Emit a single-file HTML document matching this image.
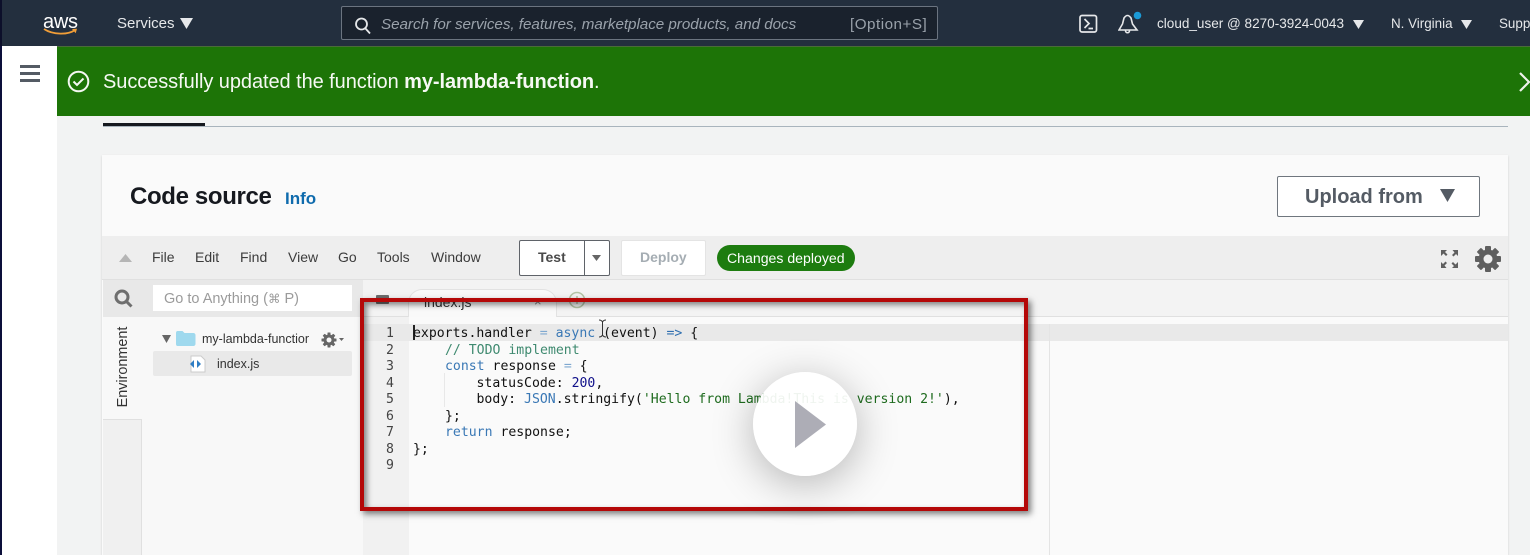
<!DOCTYPE html>
<html><head><meta charset="utf-8"><style>
html,body{margin:0;padding:0}
body{width:1530px;height:555px;overflow:hidden;position:relative;background:#f2f3f3;font-family:"Liberation Sans",sans-serif}
#w{position:absolute;left:0;top:0;width:1530px;height:555px;overflow:hidden;filter:blur(.35px)}
.a,.a *{box-sizing:border-box}
.a{position:absolute}
.t{position:absolute;white-space:nowrap;line-height:1}
.mono{font-family:"DejaVu Sans Mono",monospace;font-size:13.17px;color:#111}
.ln{position:absolute;white-space:pre;line-height:16.5px;height:16.5px}
.n{position:absolute;font-family:"DejaVu Sans Mono",monospace;font-size:13.17px;color:#444;left:386px;line-height:16.5px}
.k{color:#3a78b5}.c{color:#3f8a70}.s{color:#1e6b1e}.o{color:#7fa8d0}.d{color:#10108a}.nv{color:#2f6fb0}
.dk{font-family:"DejaVu Sans",sans-serif}
</style></head><body><div id="w">
<div class="a" style="left:0;top:0;width:2px;height:555px;background:#0c0f3a"></div>
<div class="a" style="left:2px;top:46px;width:55px;height:509px;background:#fff"></div>
<div class="a" style="left:0;top:0;width:1530px;height:46px;background:#232f3e"></div>
<div class="a" style="left:0;top:0;width:2px;height:46px;background:#0c0f2a"></div>
<div class="t" style="left:43px;top:12px;color:#fff;font-size:20px;letter-spacing:-.3px">aws</div>
<svg class="a" style="left:42px;top:27px" width="38" height="10" viewBox="0 0 38 10"><path d="M2 2C11 8 26 8 33 3" fill="none" stroke="#f19e38" stroke-width="1.8"/><path d="M30 2l5-.3-1.300 4.500z" fill="#f19e38"/></svg>
<div class="t" style="left:117px;top:16px;color:#e6e8ea;font-size:15px">Services</div>
<svg class="a" style="left:180px;top:18px" width="13" height="11"><path d="M0 0h13L6.500 11z" fill="#e6e8ea"/></svg>
<div class="a" style="left:341px;top:6px;width:597px;height:34px;background:#1a222d;border:1px solid #6b7480;border-radius:2px"></div>
<svg class="a" style="left:354px;top:16px" width="18" height="19" fill="none" stroke="#e6e8ea" stroke-width="1.800"><circle cx="7.500" cy="8" r="5.500"/><path d="M11.500 12.500l4.500 5"/></svg>
<div class="t" style="left:381px;top:17px;color:#9aa2ab;font-size:15.200px;font-style:italic;letter-spacing:-.03px">Search for services, features, marketplace products, and docs</div>
<div class="t" style="left:850px;top:17px;color:#9aa2ab;font-size:15.200px;letter-spacing:.5px">[Option+S]</div>
<svg class="a" style="left:1079px;top:14px" width="19" height="20" fill="none" stroke="#e6e8ea" stroke-width="1.700"><rect x="1" y="1.500" width="16.500" height="16.500" rx="2"/><path d="M5.500 5l4.500 4.500-4.500 4.500M9.500 14.500h4.500"/></svg>
<svg class="a" style="left:1118px;top:11px" width="26" height="24" fill="none" stroke="#e6e8ea" stroke-width="1.600"><path d="M1 19h18L14.500 13 13 7Q9.500 2 6 7L4.500 13zM7.500 19.500c0 3 4 3 4 0"/><circle cx="19.500" cy="4.500" r="3.800" fill="#1b9ad6" stroke="none"/></svg>
<div class="t" style="left:1157px;top:17px;color:#e6e8ea;font-size:13.550px">cloud_user @ 8270-3924-0043</div>
<svg class="a" style="left:1353px;top:20px" width="11" height="9"><path d="M0 0h11L5.500 9z" fill="#e6e8ea"/></svg>
<div class="t" style="left:1391px;top:17px;color:#e6e8ea;font-size:13.400px">N. Virginia</div>
<svg class="a" style="left:1461px;top:20px" width="11" height="9"><path d="M0 0h11L5.500 9z" fill="#e6e8ea"/></svg>
<div class="t" style="left:1499px;top:17px;color:#e6e8ea;font-size:13.400px">Support</div>

<div class="a" style="left:20px;top:65px;width:20px;height:3px;background:#545b64;box-shadow:0 7px 0 #545b64,0 14px 0 #545b64"></div>
<div class="a" style="left:57px;top:46px;width:1473px;height:70px;background:#1d7407;border-top:1px solid #4a6b3a"></div>
<svg class="a" style="left:67px;top:70px" width="23" height="23" fill="none" stroke="#f4f8f2" stroke-width="2"><circle cx="11.500" cy="11.500" r="9.800"/><path d="M6.500 11.500l3.500 3.500 6.500-6.500"/></svg>
<div class="t" style="left:103px;top:72px;color:#f6f9f4;font-size:20px;letter-spacing:-.07px">Successfully updated the function <b>my-lambda-function</b>.</div>
<svg class="a" style="left:1518px;top:71px" width="12" height="22" fill="none" stroke="#eef3ea" stroke-width="2.200"><path d="M2 2l9 9-9 9"/></svg>
<div class="a" style="left:103px;top:126px;width:1405px;height:1px;background:#a9b4bd"></div>
<div class="a" style="left:103px;top:123px;width:102px;height:3px;background:#16191f"></div>

<div class="a" style="left:102px;top:155px;width:1406px;height:400px;background:#fafafa;box-shadow:0 1px 2px rgba(0,0,0,.15)"></div>
<div class="t" style="left:130px;top:185px;color:#16191f;font-size:24px;font-weight:bold;letter-spacing:-.35px">Code source</div>
<div class="t" style="left:285px;top:190px;color:#0f6bad;font-size:17px;font-weight:bold">Info</div>
<div class="a" style="left:1277px;top:176px;width:203px;height:41px;background:#fff;border:1px solid #6f767e;border-radius:2px"></div>
<div class="t" style="left:1305px;top:187px;color:#545b64;font-size:20px;font-weight:bold">Upload from</div>
<svg class="a" style="left:1440px;top:189px" width="15" height="13"><path d="M0 0h15L7.500 13z" fill="#545b64"/></svg>

<div class="a" style="left:102px;top:236px;width:1406px;height:44px;background:#eeeeee;border-bottom:1px solid #e0e0e0"></div>
<svg class="a" style="left:119px;top:254px" width="13" height="8"><path d="M0 8L6.500 0 13 8z" fill="#b5b5b5"/></svg>
<div class="t" style="left:152px;top:250px;color:#3c3c3c;font-size:14px">File</div>
<div class="t" style="left:195px;top:250px;color:#3c3c3c;font-size:14px">Edit</div>
<div class="t" style="left:240px;top:250px;color:#3c3c3c;font-size:14px">Find</div>
<div class="t" style="left:288px;top:250px;color:#3c3c3c;font-size:14px">View</div>
<div class="t" style="left:338px;top:250px;color:#3c3c3c;font-size:14px">Go</div>
<div class="t" style="left:377px;top:250px;color:#3c3c3c;font-size:14px">Tools</div>
<div class="t" style="left:431px;top:250px;color:#3c3c3c;font-size:14px">Window</div>
<div class="a" style="left:519px;top:240px;width:91px;height:36px;background:#fff;border:1px solid #5f6369;border-radius:2px"></div>
<div class="a" style="left:584px;top:240px;width:1px;height:36px;background:#5f6369"></div>
<div class="t" style="left:538px;top:250px;color:#4a4a4a;font-size:14px;font-weight:bold">Test</div>
<svg class="a" style="left:592px;top:255px" width="9" height="6"><path d="M0 0h9L4.500 6z" fill="#666"/></svg>
<div class="a" style="left:621px;top:240px;width:85px;height:36px;background:#fff;border:1px solid #e4e4e4;border-radius:2px"></div>
<div class="t" style="left:640px;top:250px;color:#a5adb3;font-size:14px;font-weight:bold">Deploy</div>
<div class="a" style="left:717px;top:245px;width:138px;height:26px;background:#1d7c0f;border-radius:13px"></div>
<div class="t" style="left:727px;top:251px;color:#fff;font-size:14.100px">Changes deployed</div>
<svg class="a" style="left:1440px;top:249px" width="19" height="20" fill="#5f5f5f"><path d="M1 1h6L5 3l2.500 2.500-1.500 1.500L3.500 4.500 1 7zM18 1v6l-2-2-2.500 2.500L12 6l2.500-2.500L12.500 1zM1 19v-6l2 2 2.500-2.500L7 14l-2.500 2.500 2 2.500zM18 19h-6l2-2-2.500-2.500L13 13l2.500 2.500L18 13z"/></svg>
<svg class="a" style="left:1474px;top:245px" width="28" height="28" viewBox="0 0 28 28"><g fill="#5f5f5f"><circle cx="14" cy="14" r="9.500"/><rect x="11" y="1" width="6" height="26" rx="1"/><rect x="11" y="1" width="6" height="26" rx="1" transform="rotate(45 14 14)"/><rect x="11" y="1" width="6" height="26" rx="1" transform="rotate(90 14 14)"/><rect x="11" y="1" width="6" height="26" rx="1" transform="rotate(135 14 14)"/></g><circle cx="14" cy="14" r="4.500" fill="#eee"/></svg>

<div class="a" style="left:103px;top:280px;width:260px;height:37px;background:#e8e8e8"></div>
<svg class="a" style="left:113px;top:289px" width="21" height="20" fill="none" stroke="#6e6e6e" stroke-width="3"><circle cx="9" cy="8" r="6"/><path d="M13.500 12.500l5 5"/></svg>
<div class="a" style="left:153px;top:285px;width:199px;height:26px;background:#fff"></div>
<div class="t" style="left:164px;top:292px;color:#9b9b9b;font-size:14.500px">Go to Anything (<span class="dk" style="font-size:12.500px">⌘</span> P)</div>
<div class="a" style="left:103px;top:317px;width:260px;height:238px;background:#f8f8f8"></div>
<div class="a" style="left:103px;top:419px;width:39px;height:136px;background:#f0f0f0;border:1px solid #e0e0e0;border-width:1px 1px 0 0"></div>
<div class="t" style="left:122.500px;top:366.500px;color:#333;font-size:14.400px;transform:translate(-50%,-50%) rotate(-90deg)">Environment</div>
<svg class="a" style="left:162px;top:335px" width="9" height="8"><path d="M0 0h9L4.500 8z" fill="#666"/></svg>
<svg class="a" style="left:175px;top:330px" width="21" height="17"><path d="M1 3c0-1 .5-2 1.500-2h5l2 2h9c1 0 2 1 2 2v9c0 1-1 2-2 2H2.500C1.500 16 1 15 1 14z" fill="#9fd9ee"/></svg>
<div class="t" style="left:202px;top:333px;color:#333;font-size:12.500px;width:107px;overflow:hidden">my-lambda-function</div>
<svg class="a" style="left:320px;top:331px" width="25" height="17" viewBox="0 0 25 17"><g fill="#666"><circle cx="9" cy="9" r="5.500"/><rect x="7.500" y="1.500" width="3" height="15" rx=".5"/><rect x="7.500" y="1.500" width="3" height="15" rx=".5" transform="rotate(45 9 9)"/><rect x="7.500" y="1.500" width="3" height="15" rx=".5" transform="rotate(90 9 9)"/><rect x="7.500" y="1.500" width="3" height="15" rx=".5" transform="rotate(135 9 9)"/></g><circle cx="9" cy="9" r="2.500" fill="#f8f8f8"/><path d="M19 7h5l-2.500 3z" fill="#666"/></svg>
<div class="a" style="left:153px;top:351px;width:199px;height:25px;background:#e9e9e9;border-radius:2px"></div>
<svg class="a" style="left:188px;top:355px" width="19" height="18"><path d="M3 1h10l4 4v12H3z" fill="#fff" stroke="#ccc"/><path d="M2 9l4-4v8zM13 9l-4-4v8z" fill="#2e7dc4"/></svg>
<div class="t" style="left:217px;top:358px;color:#333;font-size:12.500px">index.js</div>

<div class="a" style="left:363px;top:280px;width:1145px;height:37px;background:#f3f3f3;border-bottom:1px solid #e0e0e0"></div>
<div class="a" style="left:376px;top:295px;width:13px;height:9px;background:#6c6c6c;border-radius:1px"></div>
<div class="a" style="left:408px;top:289px;width:149px;height:28px;background:#f9f9f9;border:1px solid #e2e2e2;border-bottom:0;border-radius:14px 14px 0 0"></div>
<div class="t" style="left:424px;top:295px;color:#333;font-size:14px">index.js</div>
<div class="t" style="left:534px;top:295px;color:#888;font-size:13px">×</div>
<svg class="a" style="left:568px;top:291px" width="18" height="18" fill="none" stroke="#b4c4a6" stroke-width="1.500"><circle cx="9" cy="9" r="7.500"/><path d="M9 5v8M5 9h8"/></svg>

<div class="a" style="left:363px;top:317px;width:1145px;height:238px;background:#fafafa"></div>
<div class="a" style="left:363px;top:317px;width:46px;height:238px;background:#f1f1f1"></div>
<div class="a" style="left:363px;top:324px;width:1145px;height:17px;background:#e9e9e9"></div>
<div class="a" style="left:1049px;top:324px;width:1px;height:231px;background:#e4e4e4"></div>
<div class="a" style="left:444px;top:373px;width:1px;height:34px;background:#e8e8e8"></div>
<div class="a" style="left:413px;top:325px;width:1.500px;height:15px;background:#222"></div>

<div class="n" style="top:326px">1</div>
<div class="n" style="top:342.500px">2</div>
<div class="n" style="top:359px">3</div>
<div class="n" style="top:375.500px">4</div>
<div class="n" style="top:392px">5</div>
<div class="n" style="top:408.500px">6</div>
<div class="n" style="top:425px">7</div>
<div class="n" style="top:441.500px">8</div>
<div class="n" style="top:458px">9</div>
<div class="a mono" style="left:413px;top:326px;width:620px;height:160px">
<div class="ln" style="left:0;top:0">exports.handler <span class="o">=</span> <span class="k">async</span> (event) <span class="nv">=&gt;</span> {</div>
<div class="ln" style="left:32px;top:16.500px"><span class="c">// TODO implement</span></div>
<div class="ln" style="left:32px;top:33px"><span class="k">const</span> response <span class="o">=</span> {</div>
<div class="ln" style="left:63.500px;top:49.500px">statusCode: <span class="d">200</span>,</div>
<div class="ln" style="left:63.500px;top:66px">body: <span class="k">JSON</span>.stringify(<span class="s">'Hello from Lambda!This is version 2!'</span>),</div>
<div class="ln" style="left:32px;top:82.500px">};</div>
<div class="ln" style="left:32px;top:99px"><span class="k">return</span> response;</div>
<div class="ln" style="left:0;top:115.500px">};</div>
</div>
<svg class="a" style="left:598px;top:319px" width="9" height="19" fill="none" stroke="#333" stroke-width="1"><path d="M1 1c2 0 3 1 3.500 2C5 2 6 1 8 1M4.500 3v13M1 18c2 0 3-1 3.500-2 .5 1 1.500 2 3.500 2"/></svg>

<div class="a" style="left:360px;top:298px;width:668px;height:213px;border:4.500px solid #b40808;box-shadow:3px 3px 6px rgba(0,0,0,.5),inset 3px 3px 6px rgba(0,0,0,.45)"></div>
<div class="a" style="left:753px;top:372px;width:104px;height:104px;border-radius:50%;background:rgba(255,255,255,.93);box-shadow:0 8px 42px rgba(0,0,0,.28)"></div>
<svg class="a" style="left:795px;top:401px" width="32" height="47"><path d="M0 0L31 23.500 0 47z" fill="#adadb6"/></svg>
</div></body></html>
